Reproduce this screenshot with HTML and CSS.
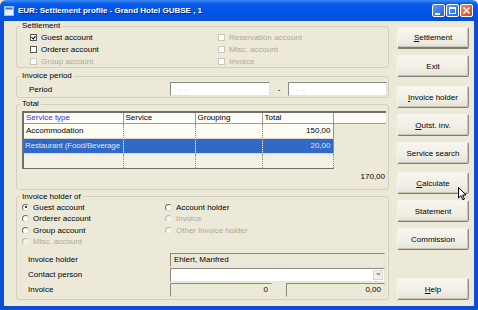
FILE: index.html
```html
<!DOCTYPE html>
<html lang="en">
<head>
  <meta charset="UTF-8" />
  <title>EUR: Settlement profile</title>
  <link rel="stylesheet" href="styles.css">
</head>
<body>

<div class="window">
  <div class="titlebar">
    <svg class="app-icon" width="10" height="10" viewBox="0 0 10 10">
      <rect x="0.5" y="0.5" width="9" height="9" fill="#e8f0ff" stroke="#9fbef0"/>
      <rect x="1.5" y="1.5" width="7" height="2" fill="#3a6fd8"/>
    </svg>
    <span class="title">EUR: Settlement profile - Grand Hotel GUBSE , 1</span>
    <div class="caption-buttons">
      <span class="cap min"><span class="glyph-min"></span></span>
      <span class="cap max"><span class="glyph-max"></span></span>
      <span class="cap close">
        <svg width="9" height="9" viewBox="0 0 9 9"><path d="M1.5 1.5 L7.5 7.5 M7.5 1.5 L1.5 7.5" stroke="#fff" stroke-width="1.6"/></svg>
      </span>
    </div>
  </div>

  <div class="client">
    <div class="main">

      <fieldset class="group">
        <legend>Settlement</legend>
        <div class="check-grid">
          <label class="check"><span class="box checked"></span>Guest account</label>
          <label class="check disabled"><span class="box"></span>Reservation account</label>
          <label class="check"><span class="box"></span>Orderer account</label>
          <label class="check disabled"><span class="box"></span>Misc. account</label>
          <label class="check disabled"><span class="box"></span>Group account</label>
          <label class="check disabled"><span class="box"></span>Invoice</label>
        </div>
      </fieldset>

      <fieldset class="group period-group">
        <legend>Invoice period</legend>
        <div class="period-row">
          <span class="field-label">Period</span>
          <span class="input date">&nbsp;.&nbsp;&nbsp;.</span>
          <span class="dash">-</span>
          <span class="input date wide">&nbsp;.&nbsp;&nbsp;.</span>
        </div>
      </fieldset>

      <fieldset class="group total-group">
        <legend>Total</legend>
        <div class="grid-wrap">
          <table class="grid">
            <colgroup>
              <col class="c1"><col class="c2"><col class="c3"><col class="c4"><col class="c5">
            </colgroup>
            <tr class="head">
              <th class="sorted">Service type</th>
              <th>Service</th>
              <th>Grouping</th>
              <th>Total</th>
              <th></th>
            </tr>
            <tr class="row">
              <td>Accommodation</td>
              <td></td>
              <td></td>
              <td class="num">150,00</td>
              <td class="blank"></td>
            </tr>
            <tr class="row selected">
              <td class="tight">Restaurant (Food/Beverage</td>
              <td></td>
              <td></td>
              <td class="num">20,00</td>
              <td class="blank"></td>
            </tr>
            <tr class="row empty">
              <td></td>
              <td></td>
              <td></td>
              <td></td>
              <td class="blank"></td>
            </tr>
          </table>
        </div>
        <div class="sum">170,00</div>
      </fieldset>

      <fieldset class="group holder-group">
        <legend>Invoice holder of</legend>
        <div class="radio-grid">
          <label class="radio"><span class="dot on"></span>Guest account</label>
          <label class="radio"><span class="dot"></span>Account holder</label>
          <label class="radio"><span class="dot"></span>Orderer account</label>
          <label class="radio disabled"><span class="dot"></span>Invoice</label>
          <label class="radio"><span class="dot"></span>Group account</label>
          <label class="radio disabled"><span class="dot"></span>Other invoice holder</label>
          <label class="radio disabled"><span class="dot"></span>Misc. account</label>
        </div>
        <div class="fields">
          <div class="field-row">
            <span class="field-label">Invoice holder</span>
            <span class="input readonly full">Ehlert, Manfred</span>
          </div>
          <div class="field-row">
            <span class="field-label">Contact person</span>
            <span class="input combo full"><span class="drop">
              <svg width="5" height="3" viewBox="0 0 5 3"><path d="M0 0 H5 L2.5 3 Z" fill="#9a9a9a"/></svg>
            </span></span>
          </div>
          <div class="field-row">
            <span class="field-label">Invoice</span>
            <span class="input readonly num short">0</span>
            <span class="input readonly num amount">0,00</span>
          </div>
        </div>
      </fieldset>

    </div>

    <div class="side">
      <button class="btn default"><u>S</u>ettlement</button>
      <button class="btn">Exit</button>
      <button class="btn spaced"><u>I</u>nvoice holder</button>
      <button class="btn"><u>O</u>utst. inv.</button>
      <button class="btn">Service search</button>
      <button class="btn spaced-sm"><u>C</u>alculate</button>
      <button class="btn">Statement</button>
      <button class="btn">Commission</button>
      <button class="btn help"><u>H</u>elp</button>
    </div>
  </div>

  <svg class="cursor" width="9" height="14" viewBox="0 0 9 14">
    <path d="M0.5 0.5 V11 L3 8.6 L4.8 12.8 L6.4 12.1 L4.7 8 H8 Z" fill="#fff" stroke="#000" stroke-width="1"/>
  </svg>
</div>

</body>
</html>
```

FILE: styles.css
```css
* {
  box-sizing: border-box;
}

body {
  margin: 0;
  font-family: 'Liberation Sans', Arial, sans-serif;
  font-size: 8px;
  color: #000;
}

.window {
  position: relative;
  width: 478px;
  height: 310px;
  display: flex;
  flex-direction: column;
  background: #ece9d8;
}

/* title bar */
.titlebar {
  height: 21px;
  display: flex;
  align-items: center;
  padding: 0 5px 0 4px;
  background: linear-gradient(#3d8cf7 0%, #0a5ce6 18%, #0056e8 50%, #0053e0 80%, #0a4fd0 100%);
  border-radius: 6px 6px 0 0;
  color: #fff;
}

.app-icon {
  flex: none;
  margin-right: 4px;
}

.title {
  flex: 1;
  font-weight: bold;
  font-size: 8px;
  text-shadow: 1px 1px 0 #0a2a8a;
}

.caption-buttons {
  display: flex;
  gap: 1px;
}

.cap {
  width: 13px;
  height: 13px;
  border: 1px solid #fff;
  border-radius: 2px;
  display: flex;
  align-items: center;
  justify-content: center;
  background: linear-gradient(135deg, #5e9bff, #2360e0);
}

.cap.close {
  background: linear-gradient(135deg, #f08a6a, #d8401c);
}

.glyph-min {
  width: 5px;
  height: 2px;
  background: #fff;
  margin-top: 6px;
  margin-right: 3px;
}

.glyph-max {
  width: 7px;
  height: 7px;
  border: 1px solid #fff;
  border-top-width: 2px;
}

/* client area */
.client {
  flex: 1;
  display: flex;
  padding-left: 12px;
  border: solid #0a4ed8;
  border-width: 0 4px 4px 4px;
}

.main {
  width: 373px;
  display: flex;
  flex-direction: column;
}

.group {
  margin: 0;
  padding: 0;
  min-width: 0;
  border: 1px solid #d0d0bf;
  border-radius: 3px;
}

.group legend {
  margin-left: 3px;
  padding: 0 2px;
  height: 10px;
  line-height: 10px;
  color: #000;
}

.period-group {
  margin-top: 3px;
}

.total-group {
  margin-top: 1px;
}

.holder-group {
  margin-top: 2px;
}

/* check boxes */
.check-grid {
  display: grid;
  grid-template-columns: 188px 1fr;
  grid-auto-rows: 12px;
  padding-left: 13px;
}

.check,
.radio {
  display: flex;
  align-items: center;
  gap: 4px;
  white-space: nowrap;
}

.box {
  width: 7px;
  height: 7px;
  border: 1px solid #555;
  background: #fff;
  position: relative;
}

.box.checked::after {
  content: '';
  position: absolute;
  left: 1px;
  top: 0;
  width: 2px;
  height: 3px;
  border: solid #000;
  border-width: 0 1px 1px 0;
  transform: rotate(40deg);
}

.disabled {
  color: #aca899;
}

.disabled .box {
  border-color: #c9c7ba;
}

/* invoice period */
.period-row {
  display: flex;
  align-items: center;
  height: 14px;
  margin: 1px 0 1px 12px;
}

.field-label {
  flex: none;
  width: 141px;
}

.input {
  height: 14px;
  line-height: 12px;
  padding: 0 3px;
  background: #fff;
  border: 1px solid;
  border-color: #8b8b80 #e6e4d8 #e6e4d8 #8b8b80;
  white-space: nowrap;
}

.input.date {
  width: 100px;
  color: #b5b3a8;
  padding-left: 5px;
}

.input.date.wide {
  width: 99px;
}

.dash {
  width: 18px;
  text-align: center;
}

/* total grid */
.grid-wrap {
  margin: 2px 0 0 5px;
  width: 363px;
}

.grid {
  width: 363px;
  border-collapse: collapse;
  table-layout: fixed;
  border-top: 2px solid #6f6e68;
  border-left: 2px solid #6f6e68;
}

.c1 { width: 100px; }
.c2 { width: 72px; }
.c3 { width: 67px; }
.c4 { width: 71px; }
.c5 { width: 53px; }

.grid th {
  height: 11px;
  padding: 0 2px;
  font-weight: normal;
  text-align: left;
  background: #fcfcf8;
  border-right: 1px solid #9c9b92;
  border-bottom: 1px solid #9c9b92;
}

.grid th:last-child {
  border-right: 0;
}

.grid th.sorted {
  color: #3434e8;
}

.grid td {
  height: 15px;
  padding: 0 2px;
  white-space: nowrap;
  overflow: hidden;
  background: #fffdf1;
  border-right: 1px dotted #8c8b84;
  border-bottom: 1px solid #d8d6c8;
}

.grid td.tight {
  padding: 0 0 0 1px;
  letter-spacing: -0.15px;
}

.grid td.num {
  text-align: right;
  border-right: 1px solid #8c8b84;
}

.grid .selected td {
  background: #3169c6;
  color: #dbe6fb;
}

.grid .empty td {
  background: #f3f1e6;
  border-bottom: 1px solid #6f6e68;
}

.grid td.blank,
.grid .selected td.blank,
.grid .empty td.blank {
  background: #ece9d8;
  border: 0;
}

.sum {
  height: 12px;
  margin: 2px 3px 6px 0;
  line-height: 12px;
  text-align: right;
}

/* radio buttons */
.radio-grid {
  display: grid;
  grid-template-columns: 143px 1fr;
  grid-auto-rows: 11.5px;
  padding-left: 5px;
}

.dot {
  width: 7px;
  height: 7px;
  border-radius: 50%;
  border: 1px solid;
  border-color: #6e6d66 #e0ded2 #e0ded2 #6e6d66;
  background: #fff;
  position: relative;
}

.dot.on::after {
  content: '';
  position: absolute;
  left: 1.5px;
  top: 1.5px;
  width: 2px;
  height: 2px;
  border-radius: 50%;
  background: #000;
}

.disabled .dot {
  border-color: #b8b6aa #eeece2 #eeece2 #b8b6aa;
  background: #f4f3ee;
}

/* holder fields */
.fields {
  display: flex;
  flex-direction: column;
  gap: 1px;
  margin: 5px 0 2px 11px;
}

.field-row {
  display: flex;
  align-items: center;
  height: 14px;
}

.field-row .field-label {
  width: 142px;
}

.input.readonly {
  background: #ece9d8;
}

.input.full {
  width: 215px;
}

.input.combo {
  display: flex;
  justify-content: flex-end;
  padding: 1px;
}

.drop {
  width: 10px;
  height: 10px;
  display: flex;
  align-items: center;
  justify-content: center;
  background: #f1f0ea;
  border: 1px solid #d6d5ce;
}

.input.num {
  text-align: right;
}

.input.short {
  width: 102px;
  margin-right: 14px;
}

.input.amount {
  width: 99px;
}

/* side buttons */
.side {
  width: 72px;
  margin-left: 8px;
  padding: 6px 0 6px;
  display: flex;
  flex-direction: column;
  gap: 6px;
}

.btn {
  flex: none;
  height: 22px;
  padding: 0;
  font-family: inherit;
  font-size: 8px;
  color: #000;
  background: linear-gradient(#f7f6f0, #efede3 70%, #e4e2d6);
  border: 1px solid;
  border-color: #f4f3ec #8e8d84 #7e7d74 #f4f3ec;
  border-radius: 2px;
  box-shadow: inset -1px -1px 0 #c7c5b8;
}

.btn.default {
  border-bottom-width: 2px;
}

.btn.spaced {
  margin-top: 3px;
}

.btn.spaced-sm {
  margin-top: 2px;
}

.btn.help {
  margin-top: auto;
}

.cursor {
  position: absolute;
  left: 458px;
  top: 187px;
}
```
